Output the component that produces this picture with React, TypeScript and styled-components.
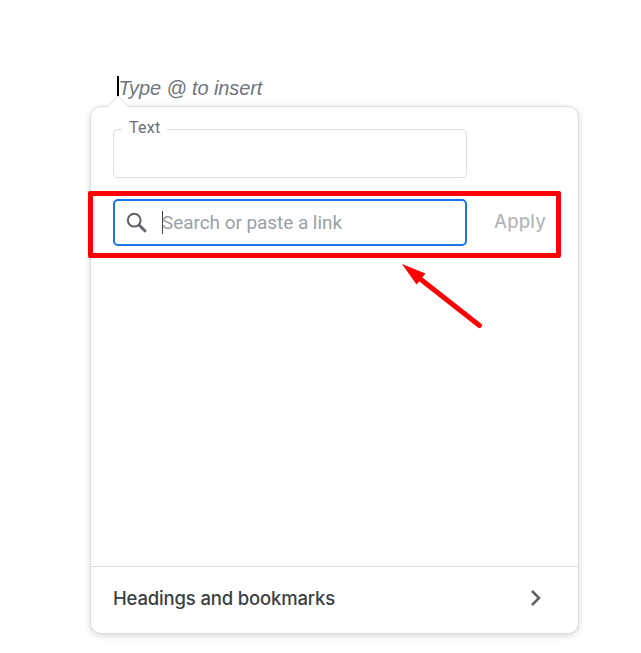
import React from "react";
import styled, { createGlobalStyle } from "styled-components";

const GlobalStyle = createGlobalStyle`
  * { box-sizing: border-box; }
  body { margin: 0; background: #fff; overflow: hidden; }
`;

const Page = styled.main`
  position: relative;
  width: 641px;
  height: 653px;
  padding: 76px 0 0 90px;
  background: #fff;
`;

const EditorLine = styled.div`
  display: flex;
  height: 30px;
  padding-left: 27px;
`;

const EditorCaret = styled.span`
  width: 2px;
  height: 20px;
  background: #000;
`;

const EditorHint = styled.span`
  font: italic 20px/24px "Liberation Sans", Arial, sans-serif;
  letter-spacing: -0.12px;
  margin-left: -0.5px;
  color: #6f7578;
  white-space: nowrap;
`;

const Card = styled.section`
  position: relative;
  display: flex;
  flex-direction: column;
  width: 489px;
  height: 528px;
  padding-top: 12px;
  border: 1px solid #dadce0;
  border-radius: 11px;
  background: #fff;
  box-shadow: 0 2px 6px rgba(60, 64, 67, 0.2);
`;

const Pointer = styled.svg`
  position: absolute;
  left: 15px;
  top: -12px;
`;

const TextField = styled.fieldset`
  width: 354px;
  height: 59px;
  min-width: 0;
  margin: 0 0 0 22px;
  padding: 0 8px;
  border: 1px solid #dadce0;
  border-radius: 5px;
`;

const FieldLegend = styled.legend`
  width: 45px;
  padding: 0 0 4px 7px;
  font: 16px/17px Roboto, sans-serif;
  letter-spacing: 0.25px;
  color: #6b6f73;
  white-space: nowrap;
`;

const LinkRow = styled.div`
  display: flex;
  align-items: center;
  margin: 21px 0 0 22px;
`;

const SearchField = styled.div`
  display: flex;
  align-items: center;
  width: 354px;
  height: 47px;
  padding-left: 11px;
  border: 2px solid #1a73e8;
  border-radius: 5px;
`;

const SearchCaret = styled.span`
  width: 1px;
  height: 23px;
  margin: 0 -1px 0 14px;
  background: #3c4043;
`;

const Placeholder = styled.span`
  font: 19px/24px Roboto, sans-serif;
  letter-spacing: -0.06px;
  color: #9aa0a6;
  white-space: nowrap;
`;

const ApplyButton = styled.button`
  margin: 0 0 3px 27px;
  padding: 0;
  border: 0;
  background: none;
  font: 450 18.5px/24px Inter, sans-serif;
  letter-spacing: 0.1px;
  color: #b7b7b7;
`;

const Footer = styled.button`
  display: flex;
  align-items: center;
  justify-content: space-between;
  height: 67px;
  margin-top: auto;
  padding: 0 35px 4px 22px;
  border: 0;
  border-top: 1px solid #dadce0;
  border-radius: 0 0 10px 10px;
  background: none;
  font: 500 18.5px/24px Inter, sans-serif;
  letter-spacing: -0.17px;
  color: #3c4043;
`;

const Highlight = styled.div`
  position: absolute;
  left: 88px;
  top: 191px;
  width: 473px;
  height: 67px;
  border: 5px solid #f00;
  border-radius: 2px;
`;

const Arrow = styled.svg`
  position: absolute;
  left: 400px;
  top: 262px;
`;

export default function App() {
  return (
    <Page>
      <GlobalStyle />
      <EditorLine>
        <EditorCaret />
        <EditorHint>Type @ to insert</EditorHint>
      </EditorLine>
      <Card>
        <Pointer width="24" height="14" viewBox="0 0 24 14">
          <path d="M1 12 L12.5 1 L23 12 V14 H1Z" fill="#fff" />
          <path d="M0.5 11.5 L1.5 11.5 L12 1 L22.5 11.5 H24" fill="none" stroke="#dadce0" />
        </Pointer>
        <TextField>
          <FieldLegend>Text</FieldLegend>
        </TextField>
        <LinkRow>
          <SearchField>
            <svg width="22" height="22" viewBox="0 0 22 22" fill="none" stroke="#5f6368">
              <circle cx="8.2" cy="8.2" r="6.4" strokeWidth="2" />
              <path d="M12.8 12.8 L19.8 19.8" strokeWidth="2.8" />
            </svg>
            <SearchCaret />
            <Placeholder>Search or paste a link</Placeholder>
          </SearchField>
          <ApplyButton>Apply</ApplyButton>
        </LinkRow>
        <Footer>
          <span>Headings and bookmarks</span>
          <svg width="14" height="18" viewBox="0 0 14 18">
            <path d="M3 2 L10 9 L3 16" fill="none" stroke="#5f6368" strokeWidth="2.6" />
          </svg>
        </Footer>
      </Card>
      <Highlight />
      <Arrow width="84" height="68" viewBox="0 0 84 68">
        <path d="M79.5 63.5 L19 16" stroke="#f00" strokeWidth="5" strokeLinecap="round" />
        <path d="M2 2 L25.5 11.5 L16.5 22.5Z" fill="#f00" />
      </Arrow>
    </Page>
  );
}
